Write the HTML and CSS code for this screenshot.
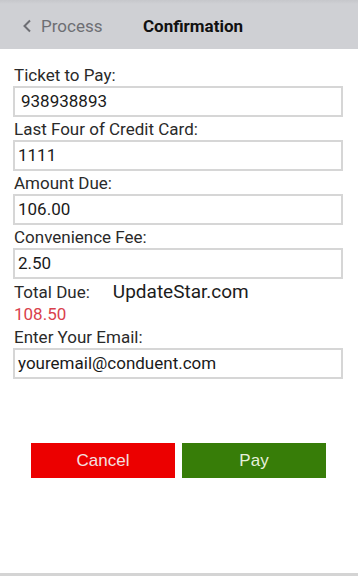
FILE: index.html
```html
<!DOCTYPE html>
<html lang="en">
<head>
    <meta charset="UTF-8">
    <meta name="viewport" content="width=device-width, initial-scale=1.0">
    <title>Confirmation</title>
    <link rel="stylesheet" href="styles.css">
</head>
<body>

<div class="screen">
    <div class="nav-bar">
        <span class="back">
            <svg class="chevron" width="10" height="14" viewBox="0 0 10 14"><path d="M8 1.5 L2.5 7 L8 12.5" fill="none" stroke="#6d6e73" stroke-width="2"/></svg>
            Process
        </span>
        <span class="title">Confirmation</span>
    </div>

    <div class="form">
        <label>Ticket to Pay:</label>
        <div class="field">938938893</div>

        <label>Last Four of Credit Card:</label>
        <div class="field">1111</div>

        <label>Amount Due:</label>
        <div class="field">106.00</div>

        <label>Convenience Fee:</label>
        <div class="field">2.50</div>

        <div class="total-row">
            <label>Total Due:</label>
            <span class="watermark">UpdateStar.com</span>
        </div>
        <div class="total">108.50</div>

        <label>Enter Your Email:</label>
        <div class="field">youremail@conduent.com</div>
    </div>

    <div class="buttons">
        <button class="btn cancel">Cancel</button>
        <button class="btn pay">Pay</button>
    </div>

    <div class="footer"></div>
</div>

</body>
</html>
```

FILE: styles.css
```css
* {box-sizing: border-box; margin: 0; padding: 0;}
body {
    font-family: Roboto, "Liberation Sans", sans-serif;
    background: #fff;
    color: #222;
    width: 358px;
    height: 576px;
    overflow: hidden;
}

.screen {
    display: flex;
    flex-direction: column;
    height: 576px;
}

.nav-bar {
    height: 49px;
    background: linear-gradient(to bottom, #c6c7cb 0px, #cfd0d4 4px, #cfd0d4 100%);
    display: flex;
    align-items: center;
    padding-left: 22px;
    padding-top: 2px;
    font-size: 17px;
}

.back {
    display: flex;
    align-items: center;
    color: #6d6e73;
    gap: 9px;
    width: 121px;
}

.title {
    font-weight: bold;
    color: #111;
}

.form {
    display: flex;
    flex-direction: column;
    padding: 0 15px 0 13px;
    margin-top: 15px;
}

label {
    font-size: 17px;
    color: #2a2a2a;
    padding-left: 1px;
    height: 22px;
    line-height: 22px;
}

.field {
    height: 31px;
    border: 2px solid #d6d6d6;
    font-size: 17px;
    line-height: 27px;
    padding-left: 3px;
    color: #1a1a1a;
    margin-bottom: 1px;
}

.form .field:first-of-type {
    padding-left: 6px;
}

.total-row {
    display: flex;
    align-items: baseline;
    gap: 23px;
    height: 22px;
    margin-top: 1px;
}

.watermark {
    font-size: 19px;
    color: #1c1c1c;
    line-height: 22px;
}

.total {
    color: #d9414c;
    font-size: 17px;
    height: 22px;
    line-height: 22px;
    padding-left: 1px;
    margin-bottom: 1px;
}

.buttons {
    display: flex;
    gap: 7px;
    padding-left: 31px;
    margin-top: 63px;
}

.btn {
    width: 144px;
    height: 35px;
    border: none;
    color: #f4e0e0;
    font-family: "Liberation Sans", Arial, sans-serif;
    font-size: 17px;
}

.cancel {
    background: #ec0000;
}

.pay {
    background: #377d08;
    color: #e6f0dc;
}

.footer {
    margin-top: auto;
    height: 3px;
    background: #d4d4d4;
}
```
